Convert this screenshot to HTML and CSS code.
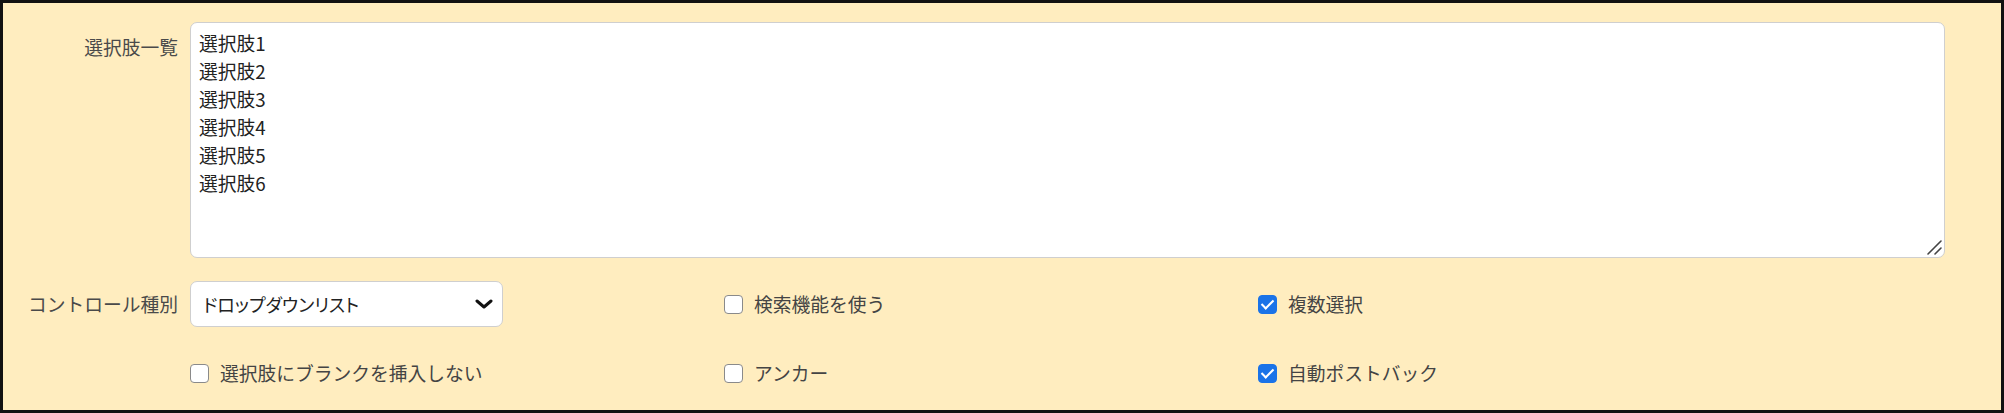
FILE: index.html
```html
<!DOCTYPE html>
<html lang="ja">
<head>
  <meta charset="UTF-8" />
  <title>選択肢設定</title>
  <link rel="stylesheet" href="styles.css">
</head>
<body>

  <form class="panel">
    <!-- 選択肢 -->
    <label class="field-label label-top" for="choices">選択肢一覧</label>
    <div class="choices-wrap">
      <textarea id="choices" class="choices">選択肢1
選択肢2
選択肢3
選択肢4
選択肢5
選択肢6</textarea>
      <svg class="grip" width="16" height="16" viewBox="0 0 16 16">
        <path d="M2 15 L15 2 M9 15 L15 9" stroke="#444" stroke-width="1.6" stroke-linecap="round"/>
      </svg>
    </div>

    <!-- コントロール -->
    <label class="field-label" for="control-type">コントロール種別</label>
    <div class="select-wrap">
      <select id="control-type" class="select">
        <option>ドロップダウンリスト</option>
        <option>ラジオボタン</option>
        <option>チェックボックス</option>
      </select>
      <svg class="chevron" width="18" height="10" viewBox="0 0 18 10">
        <path d="M2 2 L9 8 L16 2" fill="none" stroke="#111" stroke-width="3" stroke-linecap="round" stroke-linejoin="round"/>
      </svg>
    </div>
    <label class="check"><input type="checkbox"> 検索機能を使う</label>
    <label class="check"><input type="checkbox" checked> 複数選択</label>

    <div></div>
    <label class="check"><input type="checkbox"> 選択肢にブランクを挿入しない</label>
    <label class="check"><input type="checkbox"> アンカー</label>
    <label class="check"><input type="checkbox" checked> 自動ポストバック</label>
  </form>

</body>
</html>
```

FILE: styles.css
```css
/* RESET */
* {
  margin: 0;
  padding: 0;
  box-sizing: border-box;
}

body {
  font-family: "Noto Sans CJK JP", "Noto Sans", sans-serif;
  font-size: 18.75px;
  line-height: 28px;
  color: #444;
  background: #fff;
}

.panel {
  width: 2004px;
  height: 413px;
  border: 3px solid #111;
  background-color: #ffedbf;
  display: grid;
  grid-template-columns: 187px 534px 534px 1fr;
  grid-template-rows: 236px 46px 46px;
  row-gap: 23px;
  padding: 19px 56px 0 0;
}

.field-label {
  text-align: right;
  padding-right: 12px;
  align-self: center;
  color: #4a4a4a;
  white-space: nowrap;
}

.label-top {
  align-self: start;
  padding-top: 11px;
}

.choices-wrap {
  grid-column: 2 / 5;
  position: relative;
}

.choices {
  display: block;
  width: 100%;
  height: 100%;
  font: inherit;
  line-height: 28px;
  color: #222;
  background: #fff;
  border: 1px solid #cfcfcf;
  border-radius: 7px;
  padding: 6px 8px;
  resize: none;
  overflow: auto;
  outline: none;
}

/* リサイズつまみ */
.grip {
  position: absolute;
  right: 3px;
  bottom: 3px;
  pointer-events: none;
}

/* セレクト */
.select-wrap {
  position: relative;
  width: 313px;
  height: 46px;
}

.select {
  appearance: none;
  width: 100%;
  height: 100%;
  font: inherit;
  font-size: 18px;
  font-feature-settings: "palt";
  color: #222;
  background: #fff;
  border: 1px solid #cfcfcf;
  border-radius: 7px;
  padding: 0 36px 0 12px;
  outline: none;
}

.chevron {
  position: absolute;
  right: 10px;
  top: 18px;
  pointer-events: none;
}

/* チェックボックス */
.check {
  display: flex;
  align-items: center;
  gap: 11px;
  color: #444;
  white-space: nowrap;
}

.check input {
  appearance: none;
  position: relative;
  width: 19px;
  height: 19px;
  flex: none;
  background: #fff;
  border: 1.5px solid #8a8a8a;
  border-radius: 4px;
}

.check input:checked {
  background: #1a73e8;
  border-color: #1a73e8;
}

.check input:checked::after {
  content: "";
  position: absolute;
  left: 5px;
  top: 1.5px;
  width: 5px;
  height: 10px;
  border: solid #fff;
  border-width: 0 2.5px 2.5px 0;
  transform: rotate(45deg);
}
```
